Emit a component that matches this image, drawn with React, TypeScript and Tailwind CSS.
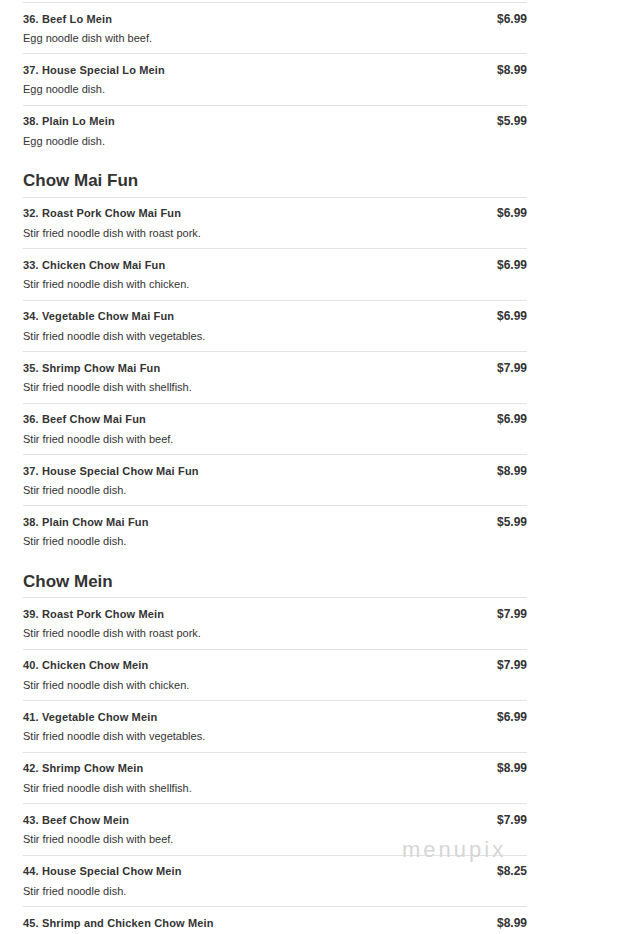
const sections = [
  {
    title: "",
    items: [
      { name: "36. Beef Lo Mein", desc: "Egg noodle dish with beef.", price: "$6.99" },
      { name: "37. House Special Lo Mein", desc: "Egg noodle dish.", price: "$8.99" },
      { name: "38. Plain Lo Mein", desc: "Egg noodle dish.", price: "$5.99" },
    ],
  },
  {
    title: "Chow Mai Fun",
    items: [
      { name: "32. Roast Pork Chow Mai Fun", desc: "Stir fried noodle dish with roast pork.", price: "$6.99" },
      { name: "33. Chicken Chow Mai Fun", desc: "Stir fried noodle dish with chicken.", price: "$6.99" },
      { name: "34. Vegetable Chow Mai Fun", desc: "Stir fried noodle dish with vegetables.", price: "$6.99" },
      { name: "35. Shrimp Chow Mai Fun", desc: "Stir fried noodle dish with shellfish.", price: "$7.99" },
      { name: "36. Beef Chow Mai Fun", desc: "Stir fried noodle dish with beef.", price: "$6.99" },
      { name: "37. House Special Chow Mai Fun", desc: "Stir fried noodle dish.", price: "$8.99" },
      { name: "38. Plain Chow Mai Fun", desc: "Stir fried noodle dish.", price: "$5.99" },
    ],
  },
  {
    title: "Chow Mein",
    items: [
      { name: "39. Roast Pork Chow Mein", desc: "Stir fried noodle dish with roast pork.", price: "$7.99" },
      { name: "40. Chicken Chow Mein", desc: "Stir fried noodle dish with chicken.", price: "$7.99" },
      { name: "41. Vegetable Chow Mein", desc: "Stir fried noodle dish with vegetables.", price: "$6.99" },
      { name: "42. Shrimp Chow Mein", desc: "Stir fried noodle dish with shellfish.", price: "$8.99" },
      { name: "43. Beef Chow Mein", desc: "Stir fried noodle dish with beef.", price: "$7.99" },
      { name: "44. House Special Chow Mein", desc: "Stir fried noodle dish.", price: "$8.25" },
      { name: "45. Shrimp and Chicken Chow Mein", desc: "", price: "$8.99" },
    ],
  },
];

export default function App() {
  return (
    <div className="relative h-[934px] w-[634px] overflow-hidden bg-white font-['Liberation_Sans',Arial,sans-serif] text-[#333]">
      <div className="ml-[23px] w-[504px] pt-[2px]">
        {sections.map((section) => (
          <div key={section.title || "top"}>
            {section.title && (
              <h2 className="mt-[15px] mb-[5.5px] h-[20px] text-[17px] font-bold leading-[20px] text-[#333]">
                {section.title}
              </h2>
            )}
            {section.items.map((item) => (
              <div
                key={item.name}
                className="h-[51.45px] border-t border-[#e3e3e3] pt-[8.5px]"
              >
                <div className="flex items-center justify-between">
                  <span className="text-[11px] font-bold leading-[14px] tracking-[0.15px]">
                    {item.name}
                  </span>
                  <span className="text-[12px] font-bold leading-[14px]">
                    {item.price}
                  </span>
                </div>
                <p className="mt-[5.5px] text-[11px] leading-[14px]">{item.desc}</p>
              </div>
            ))}
          </div>
        ))}
      </div>

      {/* watermark */}
      <div className="absolute left-[402px] top-[839px] text-[22px] font-extralight leading-none tracking-[3px] text-[#d6d6d6]">
        menupix
      </div>
    </div>
  );
}
